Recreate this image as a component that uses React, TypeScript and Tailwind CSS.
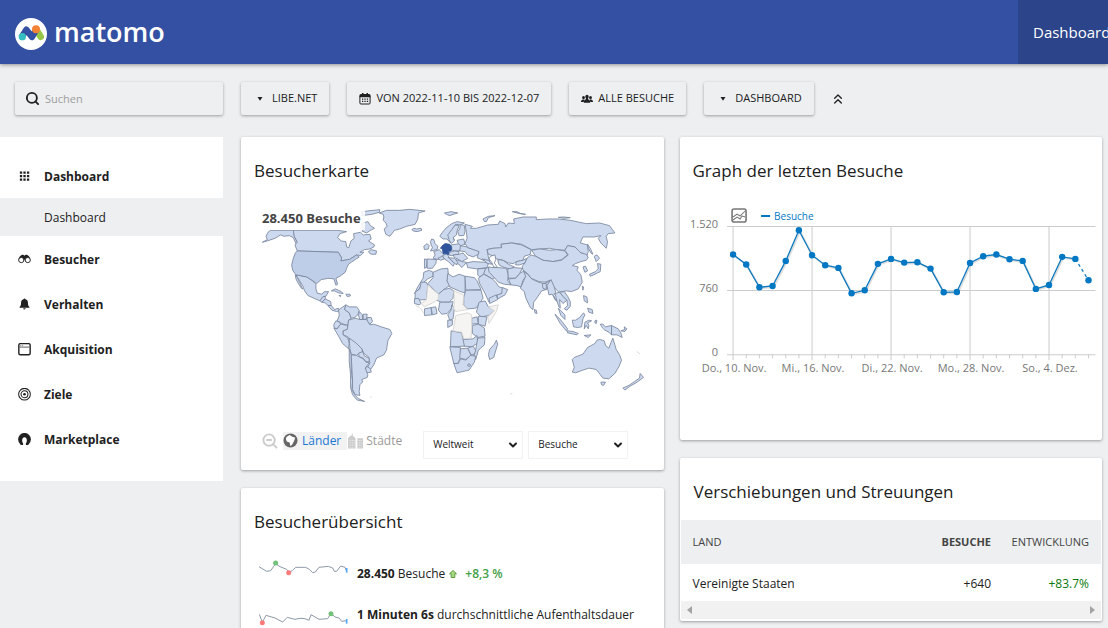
import React from 'react';
import { Search, ChevronsUp, ChevronDown } from 'lucide-react';

// Daily visits, 10 Nov to 7 Dec. The last day is still running.
const VISITS = [
  1188, 1069, 800, 815, 1112, 1476, 1180, 1061, 1029, 728, 764, 1077, 1136, 1092,
  1096, 1021, 740, 744, 1088, 1168, 1188, 1132, 1112, 780, 827, 1160, 1136, 883,
];

const DATE_LABELS = ['Do., 10. Nov.', 'Mi., 16. Nov.', 'Di., 22. Nov.', 'Mo., 28. Nov.', 'So., 4. Dez.'];

const AMERICAS = [
  // Alaska, Canada, Arctic islands
  '67,142 82,134 78,124 84,112 92,106 160,106 163,124 172,142 170,150 160,128 148,122 132,124 122,120 105,130 88,136',
  '160,106 292,106 320,110 300,116 293,128 304,138 318,140 320,156 327,158 333,138 343,130 341,116 362,112 370,120 390,118 394,132 386,138 404,150 402,156 390,162 374,164 360,172 372,172 362,182 350,180 328,194 303,198 305,188 295,172 172,168 165,150 172,142 163,124',
  '366,50 400,46 420,44 418,52 396,58 380,60 366,62',
  '366,84 384,80 392,92 404,100 392,106 380,114 366,108 374,100 366,94',
  '386,170 394,164 410,168 408,178 396,178 390,176',
  // Greenland, Iceland
  '430,58 418,54 440,46 480,46 510,43 556,48 536,54 534,72 526,88 500,94 480,102 464,106 450,124 438,118 433,102 442,94 438,84 430,76 432,66',
  '516,104 522,100 530,102 544,100 546,106 532,110 520,108',
  // Mexico, Baja, Central America
  '168,240 180,242 200,246 216,256 228,268 228,282 232,295 246,298 252,291 266,290 258,304 250,306 248,312 240,318 222,310 204,302 194,288 188,272 178,256',
  '166,240 172,248 180,264 188,283 183,278 174,264 168,252',
  '240,318 248,306 256,304 256,312 246,322',
  '246,322 256,312 272,320 274,332 264,332 256,324',
  '264,332 274,332 284,344 296,340 298,348 290,350 276,346',
  // Caribbean
  '274,288 286,282 304,290 310,296 296,294 284,288',
  '318,298 330,298 332,303 322,305',
  '297,302 303,302 302,305',
  // Colombia, Venezuela, Guyanas
  '296,346 306,338 318,330 314,344 328,354 334,370 326,376 324,392 306,386 292,378 298,362',
  '318,330 328,336 350,336 358,346 354,360 344,368 334,370 328,354 314,344',
  '358,350 368,360 368,374 360,374 356,362',
  '370,358 382,358 380,372 370,374',
  '382,368 394,368 398,380 390,388 382,378',
  // Ecuador, Peru
  '288,378 300,382 302,390 290,402 282,398 282,388',
  '282,400 292,402 302,388 324,392 322,404 310,408 310,420 324,430 328,446 326,462 308,446 296,424',
  // Brazil
  '324,392 326,376 346,370 360,374 380,374 390,390 402,388 424,396 450,404 456,416 444,438 440,466 432,480 410,490 402,510 392,524 384,516 390,504 386,486 372,476 366,462 348,446 328,434 324,426 310,420 310,408 322,404',
  // Bolivia, Paraguay, Uruguay
  '328,430 348,444 366,462 368,472 356,476 350,482 334,478 330,462',
  '356,476 368,470 374,484 388,490 388,502 378,500 370,490 358,486',
  '380,514 392,522 394,532 382,534 376,526',
  // Chile, Argentina
  '328,462 334,480 334,520 338,560 336,584 346,602 356,612 374,620 352,616 338,600 332,578 332,540 328,500',
  '334,480 350,482 358,486 370,492 378,502 388,504 376,520 384,540 382,548 366,554 368,562 360,570 358,590 360,602 346,600 338,584 338,556 336,520',
];

const USA =
  '172,168 295,172 305,188 303,198 330,193 350,180 358,186 346,194 334,202 326,208 320,220 316,232 300,244 288,250 293,268 288,271 282,252 264,250 256,252 244,254 230,266 216,256 200,246 180,242 168,240 158,226 155,210 160,190 166,174';

const EURASIA = [
  // British Isles
  '-24,132 -18,134 -14,146 -6,154 -8,164 -28,168 -22,158 -26,150 -28,140',
  '-48,154 -38,146 -32,152 -34,162 -46,164',
  // Iberia, France
  '-46,192 -38,194 -40,218 -46,220',
  '-38,192 -10,194 -12,206 -22,220 -38,220',
  '-18,170 -2,164 6,172 12,178 10,190 -6,194 -20,190 -14,180',
  // Central Europe
  '8,182 22,176 28,188 44,206 40,214 26,200 14,192',
  '-6,190 8,184 14,192 2,196',
  '34,150 60,146 64,158 60,168 44,168 34,164',
  '24,174 44,168 58,170 56,178 36,182 26,180',
  '40,180 58,178 70,174 84,190 66,200 54,192 44,188',
  '50,194 66,200 80,202 72,212 66,218 58,208 50,206',
  '26,188 44,190 54,202 50,210 40,200',
  '62,152 82,156 90,160 118,168 116,178 100,186 84,180 76,170 60,168',
  '52,136 72,132 76,148 62,152 56,146',
  // Scandinavia, Finland
  '0,124 8,112 20,98 36,86 52,80 74,84 62,90 48,88 38,104 36,122 44,134 30,142 22,132 10,132',
  '36,104 46,90 58,92 52,108 50,120 40,128 44,138 34,146 28,134 24,120',
  '62,88 74,92 76,110 72,122 58,122 54,110 60,102',
  // Svalbard, Novaya Zemlya and northern islands
  '14,54 34,50 54,54 40,58 30,62 20,58',
  '134,80 130,72 146,64 166,62 146,68 140,80',
  '218,50 232,50 244,56 258,58 240,56',
  '356,67 372,66 392,68 374,70',
  // Russia
  '76,88 98,94 92,100 110,100 144,90 176,88 180,78 196,86 198,96 206,84 224,86 222,72 250,66 290,66 290,74 326,72 356,72 392,76 440,86 480,84 510,92 526,114 506,116 500,124 504,142 500,160 484,144 476,130 484,122 464,126 430,126 422,144 444,150 446,170 440,190 432,176 418,172 406,156 384,152 376,166 350,164 330,160 300,162 276,164 268,160 246,148 216,144 184,148 186,160 160,160 142,164 146,186 150,200 130,196 112,188 118,170 84,158 76,146 82,130 80,112',
  // Kazakhstan and Central Asia
  '142,164 160,160 186,158 184,148 216,144 246,150 274,164 272,178 254,184 250,196 232,200 220,206 206,204 190,196 170,192 164,184 146,178',
  '174,194 190,196 206,208 224,216 212,222 194,218 178,210',
  '230,200 250,196 262,190 256,204 240,210 228,210',
  // Mongolia
  '276,166 300,162 330,166 350,164 376,168 384,180 366,194 340,200 310,196 288,184',
  // China
  '274,180 288,184 310,196 340,200 366,196 386,180 376,166 384,152 406,156 424,174 440,178 446,188 440,196 424,200 408,206 398,212 416,216 412,226 424,240 428,262 416,282 396,290 380,288 368,290 358,292 344,278 332,256 316,262 298,260 274,250 264,236 250,226 248,214 256,204 262,190',
  // Korea, Japan, Taiwan, Sakhalin
  '430,216 438,214 444,228 436,232',
  '474,206 484,208 482,230 462,240 452,244 450,238 468,230 476,222',
  '464,184 472,180 480,190 470,200',
  '444,148 452,160 460,178 454,174 446,160',
  '428,274 432,276 430,286',
  // Turkey, Caucasus, Levant
  '80,204 100,200 136,202 146,206 142,218 112,222 84,218',
  '128,192 146,196 158,208 144,206',
  '114,222 138,220 134,236 120,246 114,240',
  '138,220 146,218 156,240 166,248 158,252 132,236',
  // Iran, Arabia
  '146,216 160,218 174,218 200,220 206,240 204,258 214,270 194,268 176,262 160,244 148,232',
  '116,250 132,238 158,252 168,262 178,276 192,280 186,296 160,310 148,322 136,296 120,266',
  '148,310 170,300 174,314 150,326',
  '188,278 204,284 196,300 174,312 172,300 186,296',
  // Afghanistan, Pakistan
  '204,222 224,218 248,220 240,236 228,250 206,250',
  '206,252 228,250 242,234 254,228 262,240 250,256 244,276 232,272 214,270',
  // India, Nepal, Bangladesh, Sri Lanka
  '252,230 264,238 276,252 296,262 314,266 330,258 326,272 320,284 306,288 294,306 282,322 280,344 272,338 258,308 254,290 242,280 252,258 258,244',
  '308,266 320,266 320,284 310,280',
  '284,344 290,346 292,356 286,354',
  // Southeast Asia
  '322,272 334,254 344,276 348,292 342,302 352,320 346,314 338,298 328,300',
  '346,296 360,292 370,304 382,316 370,326 360,314 362,340 358,336 352,318',
  '360,292 374,290 384,304 392,320 392,334 382,346 374,342 384,332 382,316 370,304',
  '356,340 364,348 376,360 376,374 364,362',
  '346,358 364,376 384,402 380,408 362,386',
  '382,408 400,410 416,416 412,420 384,414',
  '398,376 408,376 420,368 432,354 436,360 430,372 426,396 414,398 402,396',
  '436,382 448,376 456,378 444,384 448,392 446,402 440,392 434,402',
  '432,302 442,306 444,324 434,318',
  '444,340 458,344 460,356 448,352',
  '466,378 472,376 470,386 466,384',
  '434,422 454,420 446,428',
  // New Guinea
  '482,388 490,388 498,396 516,392 516,420 508,412 496,406 488,398',
  '516,392 536,402 544,414 548,428 532,420 516,420',
  '544,408 556,404 554,396 562,402 556,410',
  // Australia, Tasmania, New Zealand
  '398,494 404,488 430,478 444,458 466,446 472,436 482,434 494,438 498,452 508,460 514,444 520,430 526,450 530,464 540,480 546,496 538,516 526,536 508,552 490,550 478,534 470,524 448,520 430,526 408,534 398,532 404,518',
  '484,562 498,562 492,572 486,570',
  '550,580 568,572 586,560 600,550 602,536 612,548 590,564 572,574 556,586',
];

const AFRICA = [
  '-48,232 -32,226 -20,232 -20,244 -36,252 -48,262 -62,282 -76,296 -66,276 -50,250',
  '-20,232 4,222 24,220 26,240 22,258 30,272 12,284 -4,298 -36,266 -20,248',
  '24,236 40,246 58,238 76,244 76,294 62,290 30,276 22,258',
  '76,244 104,248 112,258 124,284 78,286',
  '-74,292 -60,282 -56,262 -40,262 -36,272 -40,314 -74,316',
  '-76,312 -64,310 -56,326 -62,330 -76,326',
  '-4,298 12,284 30,280 42,288 40,310 28,322 4,322 -14,314',
  '-46,342 -26,338 -24,360 -46,362',
  '-26,338 -12,336 -8,356 -22,360',
  '0,322 28,322 40,320 36,340 22,356 6,358 -4,346',
  '36,330 44,340 40,372 30,376 24,360 34,346',
  '78,286 124,286 130,310 118,328 108,340 84,342 72,332 72,308',
  '118,322 136,318 146,336 166,346 148,362 124,366 110,352',
  '96,370 112,366 116,386 96,388',
  '116,364 142,366 136,394 116,388',
  '98,392 116,388 134,400 136,424 114,428 98,416',
  '34,408 66,414 70,434 96,434 76,454 32,456',
  '24,376 38,376 38,390 24,398',
  '70,434 100,432 112,422 114,444 98,456 74,454',
  '114,430 136,428 134,450 116,466 108,494 100,490 108,464',
  '30,456 62,458 62,490 54,506 42,506',
  '62,462 84,460 94,482 78,494 60,490',
  '84,460 100,454 108,466 104,478 94,480',
  '42,506 56,506 62,492 78,496 92,482 108,484 104,502 88,526 52,534',
  '150,464 164,448 170,436 174,448 162,488 150,494 146,480',
];

// Countries without any visit
const EMPTY_REGIONS = [
  '-36,272 -4,298 -4,312 -14,320 -46,336 -56,326 -40,314',
  '42,288 72,300 70,330 84,344 48,350 42,340 44,320',
  '48,362 84,354 96,360 96,400 94,430 72,432 66,412 40,408',
  '146,336 176,330 170,350 148,386 144,366 164,348',
];

const WorldMap: React.FC = () => (
  <svg viewBox="66 36 1158 594" className="w-full" role="img" aria-label="Weltkarte der Besuche">
    <g fill="#cdd9ee" stroke="#77849c" strokeWidth="2.5" strokeLinejoin="round">
      {AMERICAS.map((points) => <polygon key={points} points={points} />)}
      <polygon points={USA} fill="#bfcee8" />
      <g transform="translate(600 0)">
        {EURASIA.map((points) => <polygon key={points} points={points} />)}
        {AFRICA.map((points) => <polygon key={points} points={points} />)}
        <g fill="#f5f4f2" stroke="#d2d2d0">
          {EMPTY_REGIONS.map((points) => <polygon key={points} points={points} />)}
          <path d="M-72 332l14 8 10 16M592 470l10 8M212 597h6M-208 606l4 2" fill="none" />
        </g>
        {/* Caspian Sea, Lesotho */}
        <path d="M152 184l14-4 2 14-4 10 10 14-12-2-6-14-8-10z" fill="#fff" />
        <circle cx="88" cy="511" r="4" />
        <path d="M8 152l8-6 14 2 6 10-2 10-8 2 2 8-18-2-2-14-6-2z" fill="#2f549b" stroke="#2f549b" />
      </g>
    </g>
  </svg>
);

const VisitsChart: React.FC = () => {
  const x = (day: number) => 40 + day * 13.15;
  const y = (visits: number) => 149.5 - (visits / 1520) * 128;
  const finished = VISITS.slice(0, -1).map((v, i) => `${x(i)},${y(v)}`).join(' ');
  const last = VISITS.length - 1;

  return (
    <svg viewBox="-5 0 414 180" className="w-full text-[11px]" role="img" aria-label="Graph der letzten Besuche">
      <g stroke="#ccc">
        {[0, 760, 1520].map((v) => <line key={v} x1="34" x2="402" y1={y(v)} y2={y(v)} />)}
        {VISITS.map((_, i) => (
          <line key={i} x1={x(i)} x2={x(i)} y1={i % 6 === 0 ? 21 : 149} y2={i % 6 === 0 ? 155 : 153} />
        ))}
      </g>
      <g fill="#777" textAnchor="end">
        <text x="25" y="23">1.520</text>
        <text x="25" y="87">760</text>
        <text x="25" y="151">0</text>
      </g>
      <g fill="#777" textAnchor="middle">
        {DATE_LABELS.map((label, i) => <text key={label} x={x(i * 6) + 1} y="167">{label}</text>)}
      </g>
      <polyline points={finished} fill="none" stroke="#ddd" strokeWidth="2" transform="translate(1 1)" />
      <polyline points={finished} fill="none" stroke="#0b7abf" strokeWidth="1.3" />
      <line
        x1={x(last - 1)} y1={y(VISITS[last - 1])} x2={x(last)} y2={y(VISITS[last])}
        stroke="#0b7abf" strokeWidth="1.3" strokeDasharray="3 3"
      />
      {VISITS.map((v, i) => <circle key={i} cx={x(i)} cy={y(v)} r="3.2" fill="#0277c4" />)}
      <rect x="39" y="4" width="14" height="13" rx="2" fill="#fff" stroke="#777" strokeWidth="1.6" />
      <path d="M40 12l4-3 3 2 5-5M40 15l4-3 3 2 2-3 3 1" fill="none" stroke="#777" />
      <path d="M68 11h9" stroke="#0277c4" strokeWidth="2" />
      <text x="81" y="15" fill="#0277c4" fontSize="10">Besuche</text>
    </svg>
  );
};

const Card: React.FC<{ title: string; className?: string; children: React.ReactNode }> = ({ title, className = '', children }) => (
  <section className={`bg-white rounded-xs shadow-[0_1px_3px_rgba(0,0,0,0.35)] ${className}`}>
    <h2 className="px-[13px] pt-[21px] pb-[15px] text-[17px] leading-[26px] text-[#212121]">{title}</h2>
    {children}
  </section>
);

const ToolButton: React.FC<{ icon: React.ReactNode; children: React.ReactNode }> = ({ icon, children }) => (
  <button className="h-[33px] px-3 flex items-center gap-[5px] shrink-0 rounded-xs text-[11px] text-[#212121] whitespace-nowrap shadow-[0_1px_3px_rgba(0,0,0,0.35)]">
    {icon}
    {children}
  </button>
);

const Caret = () => (
  <svg viewBox="0 0 14 12" className="w-3.5 h-3" fill="#212121"><path d="M4.500 4h5L7 7.800z" /></svg>
);

const CalendarIcon = () => (
  <svg viewBox="0 0 12 12" className="w-3 h-3" fill="#212121">
    <path d="M2 1h1V0h1.500v1h3V0H9v1h1a1.600 1.600 0 0 1 1.600 1.600V4.200H.4V2.600A1.600 1.600 0 0 1 2 1z" />
    <rect x="0.900" y="3" width="10.200" height="8" rx="1" fill="none" stroke="#212121" />
    <path d="M3 5.500h1.300v1.200H3zM5.400 5.500h1.300v1.200H5.400zM7.800 5.500h1.300v1.200H7.800zM3 7.800h1.300V9H3zM5.400 7.800h1.300V9H5.400zM7.800 7.800h1.300V9H7.800z" />
  </svg>
);

const UsersIcon = () => (
  <svg viewBox="0 0 12 12" className="w-3 h-3" fill="#212121">
    <ellipse cx="6" cy="3.800" rx="1.700" ry="2.100" />
    <ellipse cx="2.500" cy="4.600" rx="1.400" ry="1.700" />
    <ellipse cx="9.500" cy="4.600" rx="1.400" ry="1.700" />
    <path d="M2.800 9.800C2.800 7.500 4 6.500 5 6.200V5h2v1.200c1 .3 2.200 1.300 2.200 3.600zM0 9c0-1.600.8-2.200 2-2.600h1.500L2.600 9zM12 9c0-1.600-.8-2.200-2-2.600H8.500L9.400 9z" />
  </svg>
);

const MENU = [
  {
    label: 'Dashboard',
    icon: <path d="M2 1.500h2.500V4H2zM5.800 1.500h2.500V4H5.800zM9.600 1.500h2.500V4H9.600zM2 5.300h2.500v2.500H2zM5.800 5.300h2.500v2.500H5.800zM9.600 5.300h2.500v2.500H9.600zM2 9.100h2.500v2.500H2zM5.800 9.100h2.500v2.500H5.800zM9.600 9.100h2.500v2.500H9.600z" fill="#212121" />,
  },
  {
    label: 'Besucher',
    icon: (
      <>
        <path d="M.6 7C1 4.500 3 1.800 5 1.800c1 0 1.400.8 2 .8s1-.8 2-.8c2 0 4 2.700 4.400 5.200L9 9 7 7 5 9z" fill="#212121" />
        <circle cx="3.500" cy="7.600" r="2.800" fill="#fff" stroke="#212121" />
        <circle cx="10.500" cy="7.600" r="2.800" fill="#fff" stroke="#212121" />
      </>
    ),
  },
  {
    label: 'Verhalten',
    icon: <path d="M7 .5c.7 0 1 .4 1 .9 2 .5 2.700 2 2.700 3.800 0 2.600.6 3.600 1.600 4.400v.9H1.700v-.9c1-.8 1.600-1.800 1.600-4.400C3.300 3.400 4 1.900 6 1.400c0-.5.3-.9 1-.9zM5.700 11h2.600c0 .8-.6 1.300-1.300 1.300S5.700 11.800 5.700 11z" fill="#212121" />,
  },
  {
    label: 'Akquisition',
    icon: (
      <>
        <rect x="0.900" y="0.700" width="12.200" height="12" rx="1.600" fill="none" stroke="#212121" strokeWidth="1.500" />
        <path d="M1.500 4.400h11" stroke="#555" />
        <path d="M2.500 2.700h3" stroke="#777" strokeDasharray="1 1" />
      </>
    ),
  },
  {
    label: 'Ziele',
    icon: (
      <>
        <circle cx="7" cy="6.700" r="6.300" fill="none" stroke="#212121" strokeWidth="1.100" />
        <circle cx="7" cy="6.700" r="3.700" fill="none" stroke="#212121" strokeWidth="1.100" />
        <circle cx="7" cy="6.700" r="1.400" fill="#212121" />
      </>
    ),
  },
  {
    label: 'Marketplace',
    icon: <path d="M2.400 12A6.900 6.900 0 1 1 11.600 12L11 13H8.500V11.300C10.300 9 9.800 4.700 7 4.700S3.700 9 5.500 11.300V13H3z" fill="#212121" />,
  },
];

const MapSelect: React.FC<{ label: string; value: string }> = ({ label, value }) => (
  <div className="grid items-center w-[100px]">
    <select aria-label={label} className="col-start-1 row-start-1 appearance-none h-7 px-[9px] text-[10px] text-[#212121] bg-white border border-[#f2f2f2]">
      <option>{value}</option>
    </select>
    <ChevronDown className="col-start-1 row-start-1 justify-self-end w-3 h-3 mr-1 pointer-events-none" strokeWidth={4} />
  </div>
);

const SPARKLINES = [
  { line: '57,20 80,34 92,32 107,11 120,20 140,28 146,37 157,32 167,22 197,22 208,28 218,38 226,36 237,22 265,19 278,24 283,34 290,34 302,18 315,22 319,32', high: [107, 9], low: [146, 38] },
  { line: '58,10 67,34 78,13 105,21 128,33 142,19 165,25 180,22 195,23 207,28 213,11 225,18 237,25 263,23 273,7 285,18 297,21 305,31 319,29', high: [273, 8], low: [67, 35] },
];

const Sparkline: React.FC<{ index: number }> = ({ index }) => {
  const { line, high, low } = SPARKLINES[index];
  return (
    <svg viewBox="54 0 270 48" className="w-[90px] h-4 shrink-0">
      <polyline points={line} fill="none" stroke="#8d99a8" strokeWidth="3" />
      <circle cx={high[0]} cy={high[1]} r="7.500" fill="#74c17a" />
      <circle cx={low[0]} cy={low[1]} r="7.500" fill="#ff7b7b" />
      <path d="M320 24v14" stroke="#55a7f5" strokeWidth="5" />
    </svg>
  );
};

const App: React.FC = () => (
  <div className="h-screen flex flex-col overflow-hidden bg-[#edeff1] font-['Open_Sans',sans-serif] text-[#212121]">
    <header className="h-16 shrink-0 flex items-stretch justify-between bg-[#3450a3] text-white shadow-[0_1px_4px_rgba(0,0,0,0.4)]">
      <a href="#" className="flex items-center gap-[7px] pt-1 pl-[15px]">
        <svg viewBox="0 0 96 96" className="w-8 h-8">
          <circle cx="48" cy="48" r="48" fill="#fff" />
          <path d="M64 35l13 21" stroke="#95c748" strokeWidth="20" strokeLinecap="round" />
          <path d="M22 54L34 35 51 57 62 38" fill="none" stroke="#3450a3" strokeWidth="19" strokeLinecap="round" strokeLinejoin="round" />
          <circle cx="63" cy="34" r="12" fill="#f38334" />
          <circle cx="22" cy="56" r="11" fill="#35bfc0" />
        </svg>
        <span className="pb-1 text-[27px] leading-8 font-semibold">matomo</span>
      </a>
      <nav className="w-[90px] bg-[#2c4489]">
        <a href="#" className="h-full flex items-center pl-[15px] text-[15px]">Dashboard</a>
      </nav>
    </header>

    <div className="flex items-center gap-[18px] pt-[18px] pb-[22px] pr-1.5 pl-[15px]">
      <label className="w-52 h-[33px] shrink-0 flex items-center gap-[5px] px-2.5 rounded-xs shadow-[0_1px_3px_rgba(0,0,0,0.35)]">
        <Search className="w-[15px] h-[15px] shrink-0" strokeWidth={3} aria-label="Suche" />
        <input type="text" placeholder="Suchen" className="w-full min-w-0 pt-0.5 bg-transparent text-[11px] placeholder:text-[#9e9e9e] outline-none" />
      </label>
      <ToolButton icon={<Caret />}>LIBE.NET</ToolButton>
      <ToolButton icon={<CalendarIcon />}>VON 2022-11-10 BIS 2022-12-07</ToolButton>
      <ToolButton icon={<UsersIcon />}>ALLE BESUCHE</ToolButton>
      <ToolButton icon={<Caret />}>DASHBOARD</ToolButton>
      <button aria-label="Einklappen" className="-ml-0.5"><ChevronsUp className="w-4 h-4" /></button>
    </div>

    <div className="flex-1 min-h-0 flex items-start gap-[18px] pr-1.5">
      <nav className="w-[223px] shrink-0 bg-white pt-4 pb-5">
        {MENU.map(({ label, icon }) => (
          <React.Fragment key={label}>
            <a href="#" className="h-[45px] flex items-center gap-[13px] pt-0.5 pl-[18px] text-xs font-bold">
              <svg viewBox="0 0 14 14" className="w-[13px] h-[13px]">{icon}</svg>
              {label}
            </a>
            {label === 'Dashboard' && (
              <a href="#" className="h-[38px] flex items-center pt-0.5 pl-11 bg-[#edeff1] text-xs">Dashboard</a>
            )}
          </React.Fragment>
        ))}
      </nav>

      <main className="flex-1 min-w-0 grid grid-cols-2 gap-4 items-start">
        <div className="flex flex-col gap-[18px]">
          <Card title="Besucherkarte" className="pb-[11px]">
            <div className="relative pt-2 pl-[21px] pr-4">
              <WorldMap />
              <span className="absolute left-[18px] top-[7px] pl-[3px] pr-1 text-[13px] leading-6 font-bold text-[#444] bg-white/85">
                28.450 Besuche
              </span>
            </div>
            <div className="flex items-end gap-[5px] pt-[26px] pl-[21px] text-xs">
              <div className="flex items-center gap-[5px] pb-[9px]">
                <button aria-label="Verkleinern">
                  <svg viewBox="0 0 17 18" className="w-4 h-[18px]" fill="none" stroke="#ccc" strokeWidth="2">
                    <circle cx="7.500" cy="8" r="6" />
                    <path d="M4.500 8h6M12 12.500l4 4" />
                  </svg>
                </button>
                <button className="flex items-center gap-1 pr-1.5 h-[18px] bg-[#f2f2f2] text-[#1976d2]">
                  <svg viewBox="0 0 16 16" className="w-[15px] h-[15px]">
                    <circle cx="8" cy="8" r="7.500" fill="#666" />
                    <path d="M4 4l3-2 3 2 3 1-1 3-2 4-2 2-1-4-3-1-1-3z" fill="#fff" />
                  </svg>
                  Länder
                </button>
              </div>
              <div className="pb-[9px] -ml-1">
                <button className="flex items-center gap-[3px] h-[18px] text-[#999]">
                  <svg viewBox="0 0 16 16" className="w-[15px] h-4" fill="#ccc">
                    <path d="M4 0h1v2l3 3v11H0V5l3-3h1zM10 5h6v11h-6z" />
                    <path d="M2.200 7v8M4.500 7v8M6.500 7v8M12 7v8M14 7v8" stroke="#fff" strokeWidth=".8" strokeDasharray="1 1.500" />
                  </svg>
                  Städte
                </button>
              </div>
              <div className="flex gap-[5px] ml-4">
                <MapSelect label="Region" value="Weltweit" />
                <MapSelect label="Kennzahl" value="Besuche" />
              </div>
            </div>
          </Card>

          <Card title="Besucherübersicht" className="min-h-[300px]">
            <div className="flex flex-col gap-[17px] px-[17px] pt-2.5 text-xs leading-6">
              <div className="flex items-start gap-[9px]">
                <Sparkline index={0} />
                <p className="flex items-center pt-0.5">
                  <span><strong>28.450</strong> Besuche</span>
                  <svg viewBox="0 0 8 8" className="w-2 h-2 ml-1 mr-2"><path d="M4 .5l3.500 3.300H5.800v3.700H2.200V3.800H.5z" fill="#a8d883" stroke="#5c9d3b" /></svg>
                  <span className="font-semibold text-[#43a047]">+8,3 %</span>
                </p>
              </div>
              <div className="flex items-start gap-[9px]">
                <div className="pt-2 flex"><Sparkline index={1} /></div>
                <p className="whitespace-nowrap"><strong>1 Minuten 6s</strong> durchschnittliche Aufenthaltsdauer</p>
              </div>
            </div>
          </Card>
        </div>

        <div className="flex flex-col gap-[18px]">
          <Card title="Graph der letzten Besuche" className="pb-[55px]">
            <div className="pt-1.5 pl-2"><VisitsChart /></div>
          </Card>

          <Card title="Verschiebungen und Streuungen" className="px-px pb-0.5">
            <table className="w-full text-xs">
              <thead>
                <tr className="h-11 bg-[#edeff1] text-[11px] text-[#444]">
                  <th className="pl-3 text-left font-normal">LAND</th>
                  <th className="text-right font-bold">BESUCHE</th>
                  <th className="w-[110px] pr-3 text-right font-normal">ENTWICKLUNG</th>
                </tr>
              </thead>
              <tbody>
                <tr className="h-[37px]">
                  <td className="pt-0.5 pl-3">Vereinigte Staaten</td>
                  <td className="pt-0.5 text-right">+640</td>
                  <td className="pt-0.5 pr-3 text-right text-[#0a7a0a]">+83.7%</td>
                </tr>
              </tbody>
            </table>
            <div className="h-[18px] flex items-center justify-between px-1.5 bg-[#f1f1f1]">
              <svg viewBox="0 0 5 8" className="w-[5px] h-2" fill="#a3a3a3"><path d="M5 0v8L0 4z" /></svg>
              <svg viewBox="0 0 5 8" className="w-[5px] h-2" fill="#a3a3a3"><path d="M0 0v8l5-4z" /></svg>
            </div>
          </Card>
        </div>
      </main>
    </div>
  </div>
);

export default App;
